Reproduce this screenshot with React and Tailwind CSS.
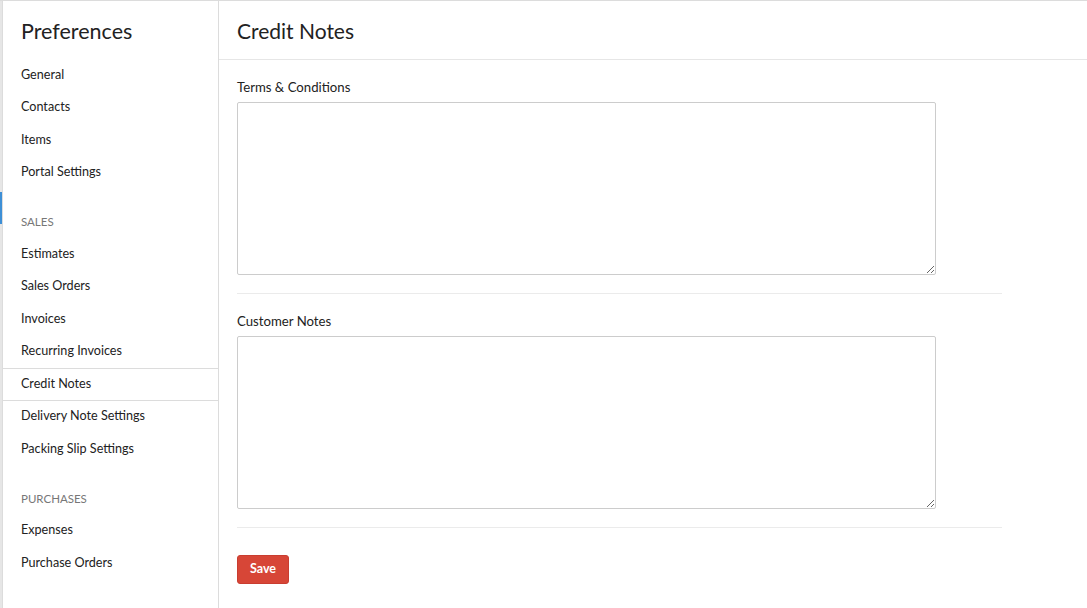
import React from "react";

const groups = [
  { title: null, items: ["General", "Contacts", "Items", "Portal Settings"] },
  {
    title: "SALES",
    items: [
      "Estimates",
      "Sales Orders",
      "Invoices",
      "Recurring Invoices",
      "Credit Notes",
      "Delivery Note Settings",
      "Packing Slip Settings",
    ],
  },
  { title: "PURCHASES", items: ["Expenses", "Purchase Orders"] },
];

const Sidebar = ({ active }) => (
  <aside className="w-[217px] shrink-0 border-l border-r border-[#dcdcdc] bg-white">
    <h1 className="h-[58px] pl-[18px] pt-[16px] text-[21.5px] leading-[28px] text-[#222]">
      Preferences
    </h1>
    {groups.map((group, i) => (
      <div key={i}>
        {group.title && (
          <div className="mt-[16.5px] flex h-[32.5px] items-center pl-[18px] text-[11.5px] text-[#777]">
            {group.title}
          </div>
        )}
        {group.items.map((item) => (
          <div
            key={item}
            className={
              item === active
                ? "flex h-[32.5px] items-center border-y border-[#dcdcdc] pl-[18px] text-[12.6px] text-[#222]"
                : "flex h-[32.5px] items-center pl-[18px] text-[12.6px] text-[#222]"
            }
          >
            {item}
          </div>
        ))}
      </div>
    ))}
  </aside>
);

const NoteField = ({ label }) => (
  <div className="pt-[19px]">
    <label className="block text-[13.2px] leading-[17px] text-[#222]">{label}</label>
    <textarea className="mt-[6px] block h-[173px] w-[699px] rounded-[2px] border border-[#cccccc] bg-white outline-none" />
    <div className="mt-[18px] border-b border-[#ebebeb]" />
  </div>
);

export default function App() {
  return (
    <div
      className="flex h-[608px] w-full overflow-hidden border-t border-[#dcdcdc] bg-white"
      style={{ fontFamily: "Lato, 'Open Sans', sans-serif" }}
    >
      <div className="relative w-[2px] shrink-0 bg-[#e6e6e6]">
        <div className="absolute left-0 top-[191px] h-[32px] w-[2px] bg-[#3d8fd6]" />
      </div>
      <Sidebar active="Credit Notes" />
      <main className="flex-1">
        <div className="h-[59px] border-b border-[#e6e6e6] pl-[18px] pt-[16px]">
          <h2 className="text-[21px] leading-[28px] text-[#222]">Credit Notes</h2>
        </div>
        <div className="w-[783px] pl-[18px]">
          <NoteField label="Terms & Conditions" />
          <NoteField label="Customer Notes" />
          <button className="mt-[27px] h-[29px] w-[52px] rounded-[3px] border border-[#c93d30] bg-[#d74637] text-[12.5px] font-bold text-white">
            Save
          </button>
        </div>
      </main>
    </div>
  );
}
